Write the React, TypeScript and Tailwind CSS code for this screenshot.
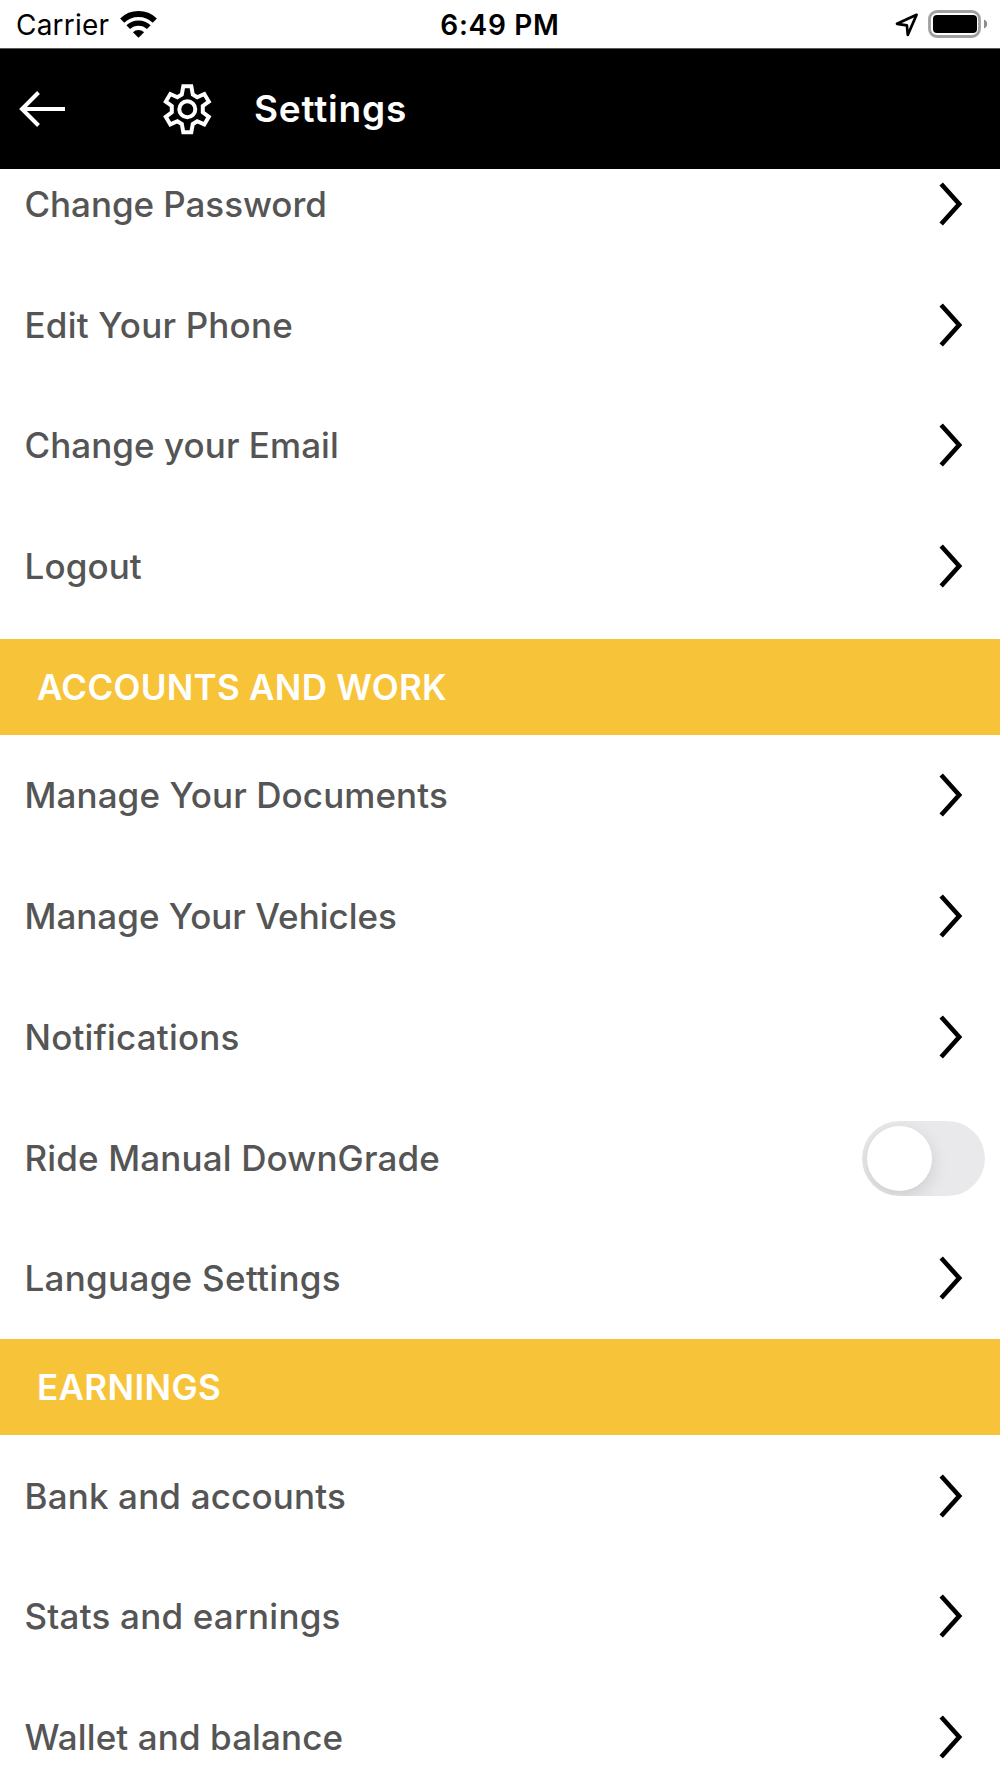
import { clsx } from 'clsx';

type Item = {
  label: string;
  tracking: string;
  toggle?: boolean;
};

const PROFILE: Item[] = [
  { label: 'Change Password', tracking: 'tracking-[-0.06px]' },
  { label: 'Edit Your Phone', tracking: 'tracking-[0.2px]' },
  { label: 'Change your Email', tracking: 'tracking-[0.05px]' },
  { label: 'Logout', tracking: 'tracking-[0.1px]' },
];

const WORK: Item[] = [
  { label: 'Manage Your Documents', tracking: 'tracking-[0.09px]' },
  { label: 'Manage Your Vehicles', tracking: 'tracking-[0px]' },
  { label: 'Notifications', tracking: 'tracking-[0.17px]' },
  { label: 'Ride Manual DownGrade', tracking: 'tracking-[0.14px]', toggle: true },
  { label: 'Language Settings', tracking: 'tracking-[0.3px]' },
];

const EARNINGS: Item[] = [
  { label: 'Bank and accounts', tracking: 'tracking-[0.16px]' },
  { label: 'Stats and earnings', tracking: 'tracking-[0.2px]' },
  { label: 'Wallet and balance', tracking: 'tracking-[0.1px]' },
];

function StatusBar() {
  return (
    <div className="grid h-12 grid-cols-3 items-center bg-white text-[28px] leading-none text-black">
      <div className="flex items-center pl-[16px]">
        <span className="pt-[2px] tracking-[0.2px]">Carrier</span>
        <svg className="ml-[11px] h-[28px] w-[37px]" viewBox="0 0 37 28" fill="none" stroke="#000">
          <path d="M2.2 10.6a23.500 23.500 0 0 1 32.600 0" strokeWidth="6" />
          <path d="M8.2 17.2a14.800 14.800 0 0 1 20.600 0" strokeWidth="5.2" />
          <path d="M18.5 27.8l-5.600-5.600a8 8 0 0 1 11.200 0z" fill="#000" stroke="none" />
        </svg>
      </div>
      <div className="pt-[2px] text-center font-semibold tracking-[0.7px]">6:49 PM</div>
      <div className="flex items-center justify-end pr-[12px]">
        <svg className="mt-[2px] mr-[9px] h-[24px] w-[24px]" viewBox="0 0 24 24" fill="none" stroke="#000" strokeWidth="2.7" strokeLinejoin="round">
          <path d="M21.6 1.8L2 10.8l9.9 1.5.9 9.6z" />
        </svg>
        <svg className="h-[28px] w-[60px]" viewBox="0 0 60 28">
          <rect x="1.5" y="1.5" width="50" height="25" rx="7.5" fill="none" stroke="#a0a0a0" strokeWidth="2.8" />
          <rect x="5" y="5" width="44" height="18" rx="4" fill="#000" />
          <path d="M56 9.5q3.2 1.4 3.2 4.5t-3.2 4.5z" fill="#8e8e8e" />
        </svg>
      </div>
    </div>
  );
}

function Header() {
  return (
    <header className="relative z-10 flex h-[121px] items-center border-t border-[#5a5a5a] bg-black text-white">
      <svg className="ml-[19px] h-[36px] w-[47px]" viewBox="0 0 47 36" fill="none" stroke="#fff" strokeWidth="4">
        <path d="M46 18H3M19.5 1.5L3 18l16.5 16.5" />
      </svg>
      <svg className="ml-[92px] h-[58px] w-[58px]" viewBox="0 0 58 58" fill="none" stroke="#fff" strokeWidth="4">
        <circle cx="29.3" cy="29.2" r="8" />
        <path d="M25.3 6.2H33.3L34.8 14.5L39.2 17.2L46.3 14L50.8 21.6L44.8 26V32.3L50.8 36.8L46.3 44.4L39.2 41.2L34.8 44L33.3 52.2H25.3L23.8 44L19.4 41.2L12.3 44.4L7.8 36.8L13.8 32.3V26L7.8 21.6L12.3 14L19.4 17.2L23.8 14.5Z" />
      </svg>
      <h1 className="-mt-[1px] ml-[38px] text-[37px] leading-none font-semibold tracking-[0.8px]">Settings</h1>
    </header>
  );
}

function Toggle() {
  return (
    <div className="mt-[1px] mr-[15px] flex h-[75px] w-[123px] items-center overflow-hidden rounded-full bg-[#e9e9eb] pl-[5px]">
      <div className="h-[65px] w-[65px] rounded-full bg-white shadow-[0_6px_18px_rgba(0,0,0,0.12)]" />
    </div>
  );
}

function Chevron() {
  return (
    <svg className="mr-[36px] h-[44px] w-[26px]" viewBox="0 0 26 44" fill="none" stroke="#000" strokeWidth="4.6">
      <path d="M3.2 2L21.2 22L3.2 42" />
    </svg>
  );
}

function Row({ label, tracking, toggle }: Item) {
  return (
    <li className="flex h-[120.75px] items-center justify-between pl-[24.5px]">
      <span className={clsx('pt-[1px] text-[35px] leading-none font-medium whitespace-nowrap text-[#555]', tracking)}>
        {label}
      </span>
      {toggle ? <Toggle /> : <Chevron />}
    </li>
  );
}

function List({ items }: { items: Item[] }) {
  return (
    <ul>
      {items.map((item) => (
        <Row key={item.label} {...item} />
      ))}
    </ul>
  );
}

function SectionTitle({ title, tracking }: { title: string; tracking: string }) {
  return (
    <h2
      className={clsx(
        'flex h-[96.5px] items-center bg-[#f7c439] pt-[1px] pl-[37px] text-[35px] leading-none font-semibold text-white',
        tracking,
      )}
    >
      {title}
    </h2>
  );
}

export default function App() {
  return (
    <div className="h-[1778px] w-[1000px] overflow-hidden bg-white font-['Inter',sans-serif]">
      <StatusBar />
      <Header />
      {/* list is scrolled a little way under the header */}
      <main className="-mt-[25.6px]">
        <List items={PROFILE} />
        <div className="h-[12.2px]" />
        <SectionTitle title="ACCOUNTS AND WORK" tracking="tracking-[0.28px]" />
        <List items={WORK} />
        <SectionTitle title="EARNINGS" tracking="tracking-[0.35px]" />
        <List items={EARNINGS} />
      </main>
    </div>
  );
}
